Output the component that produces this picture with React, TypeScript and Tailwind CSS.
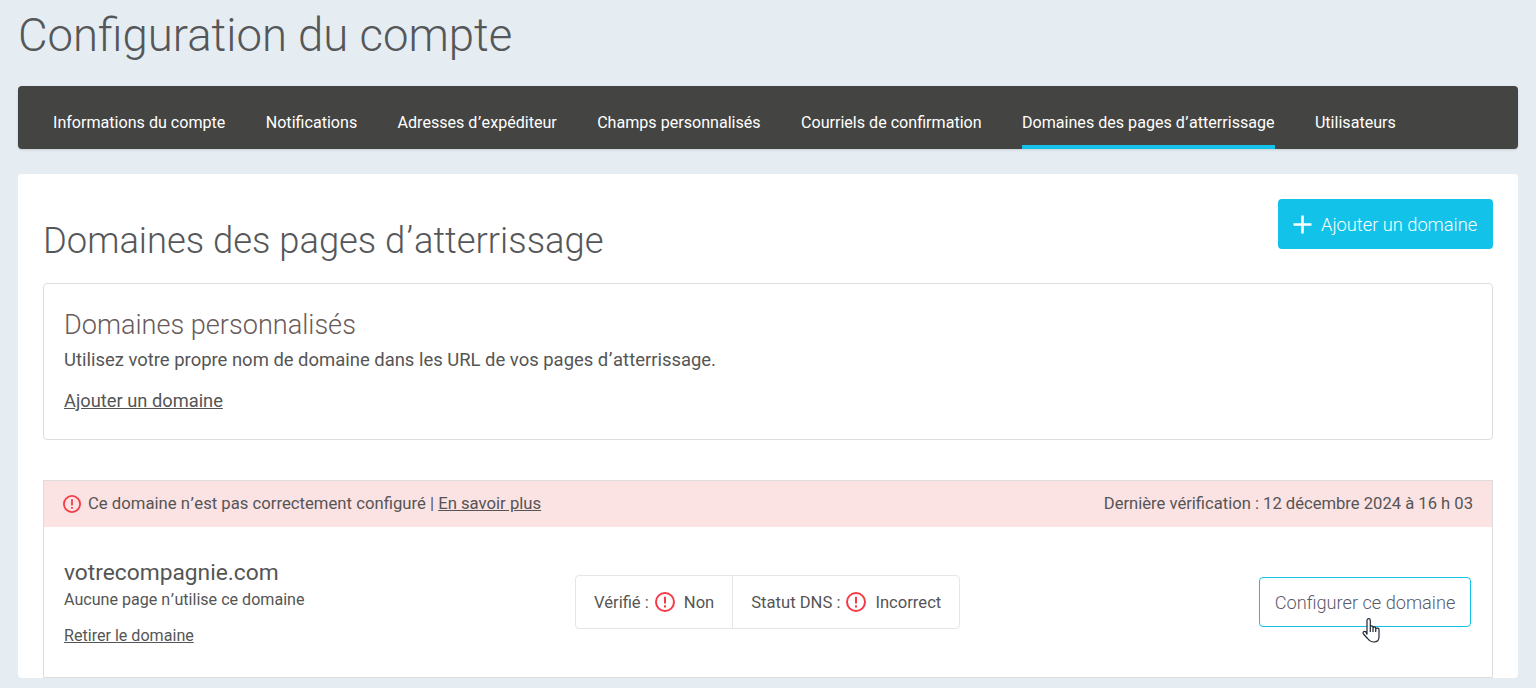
const TABS = [
  "Informations du compte",
  "Notifications",
  "Adresses d’expéditeur",
  "Champs personnalisés",
  "Courriels de confirmation",
  "Domaines des pages d’atterrissage",
  "Utilisateurs",
];

// the apostrophe sits a bit wider in the original font
function Apos() {
  return <span className="mx-[0.03em]">’</span>;
}

function withApos(text: string) {
  const parts = text.split("’");
  if (parts.length === 1) return text;
  return (
    <>
      {parts[0]}
      <Apos />
      {parts[1]}
    </>
  );
}

function AlertIcon({ size }: { size: number }) {
  return (
    <svg width={size} height={size} viewBox="0 0 20 20" fill="none" className="shrink-0">
      <circle cx="10" cy="10" r="9" stroke="#f63b48" strokeWidth="2" />
      <path d="M10 4.8v6.8" stroke="#f63b48" strokeWidth="2" />
      <path d="M10 13.2v2.2" stroke="#f63b48" strokeWidth="2" />
    </svg>
  );
}

function HandCursor() {
  return (
    <svg width="18" height="25" viewBox="0 0 18 25" fill="#fff" stroke="#1f2933" strokeWidth="1.2" className="absolute top-[91px] right-[112px]">
      <path d="M5 16.5L5 2.5C5 0 8.3 0 8.3 2.5L8.3 9C8.3 7.4 11 7.4 11 9L11 10C11 8.6 13.7 8.6 13.7 10L13.7 11C13.7 9.8 17 9.8 17 11.5L17 19C17 22 15.5 24 12 24C8.5 24 7.5 23 5.5 20.5L1.5 16C0 14 2.5 12.5 4 14Z" />
      <path d="M8.3 9V14M11 10V14M13.7 11V14" fill="none" />
    </svg>
  );
}

export default function App() {
  return (
    <div className="h-[688px] overflow-hidden bg-[#e5edf3] px-[18px] font-['Roboto',sans-serif] text-[#555555]">
      <h1 className="h-[86px] pt-[9px] text-[45.5px] leading-[54px] font-light text-[#555759]">
        Configuration du compte
      </h1>

      <nav className="flex h-[63px] gap-[40.3px] rounded-[4px] bg-[#444442] px-[35px] pt-[24px] shadow-sm">
        {TABS.map((tab) => (
          <a
            key={tab}
            className={
              tab.startsWith("Domaines")
                ? "h-[39px] border-b-4 border-[#12c2e9] text-[16.1px] leading-[26px] text-white"
                : "h-[39px] text-[16.1px] leading-[26px] text-white"
            }
          >
            {withApos(tab)}
          </a>
        ))}
      </nav>

      <main className="mt-[25px] rounded-[4px] bg-white px-[25px] pt-[25px]">
        <div className="flex h-[84px] items-start justify-between">
          <h2 className="pt-[21px] text-[36.35px] leading-[42px] font-light text-[#555759]">
            {withApos("Domaines des pages d’atterrissage")}
          </h2>
          <button className="flex h-[50px] w-[215px] items-center gap-[9px] rounded-[4px] bg-[#12c2e9] pl-[15px] text-[18.25px] font-light text-white">
            <svg width="19" height="19" viewBox="0 0 19 19" className="shrink-0">
              <path d="M9.5 0.5v18M0.5 9.5h18" stroke="#fff" strokeWidth="2.6" />
            </svg>
            <span className="pt-[2px]">Ajouter un domaine</span>
          </button>
        </div>

        <section className="h-[157px] rounded-[4px] border border-[#dddddd] px-[20px] pt-[25px]">
          <h3 className="text-[27.1px] leading-[32px] font-light text-[#6a5a5a]">Domaines personnalisés</h3>
          <p className="mt-[7px] text-[18.45px] leading-[24px]">
            {withApos("Utilisez votre propre nom de domaine dans les URL de vos pages d’atterrissage.")}
          </p>
          <a className="mt-[17px] block text-[18.3px] leading-[24px] underline">Ajouter un domaine</a>
        </section>

        <section className="mt-[40px] border border-[#dddddd]">
          <div className="flex h-[46px] items-center justify-between bg-[#fbe2e3] px-[19px] text-[16.7px]">
            <div className="flex items-center gap-[7px]">
              <AlertIcon size={18} />
              <span>
                {withApos("Ce domaine n’est pas correctement configuré")} | <a className="underline">En savoir plus</a>
              </span>
            </div>
            <span className="text-[16.6px]">Dernière vérification : 12 décembre 2024 à 16 h 03</span>
          </div>

          <div className="relative flex h-[150px] items-start pr-[21px] pl-[20px]">
            <div className="w-[511px] pt-[33px]">
              <p className="text-[22.75px] leading-[26px]">votrecompagnie.com</p>
              <p className="mt-[3px] text-[16.1px] leading-[22px]">{withApos("Aucune page n’utilise ce domaine")}</p>
              <a className="mt-[14px] block text-[16.1px] leading-[22px] underline">Retirer le domaine</a>
            </div>

            <div className="mt-[48px] flex h-[54px] items-center rounded-[4px] border border-[#e6e6e6] text-[16.6px]">
              <div className="flex h-full items-center gap-[6px] border-r border-[#e6e6e6] px-[18px]">
                <span className="pt-[2px]">Vérifié :</span>
                <AlertIcon size={20} />
                <span className="ml-[3px] pt-[2px]">Non</span>
              </div>
              <div className="flex h-full items-center gap-[6px] px-[18px]">
                <span className="pt-[2px]">Statut DNS :</span>
                <AlertIcon size={20} />
                <span className="ml-[3px] pt-[2px]">Incorrect</span>
              </div>
            </div>

            <button className="mt-[50px] ml-auto flex h-[50px] w-[212px] items-center justify-center rounded-[4px] border border-[#12c2e9] pt-[2px] text-[18.2px] font-light text-[#5a5a6a]">
              Configurer ce domaine
            </button>

            <HandCursor />
          </div>
        </section>
      </main>
    </div>
  );
}
